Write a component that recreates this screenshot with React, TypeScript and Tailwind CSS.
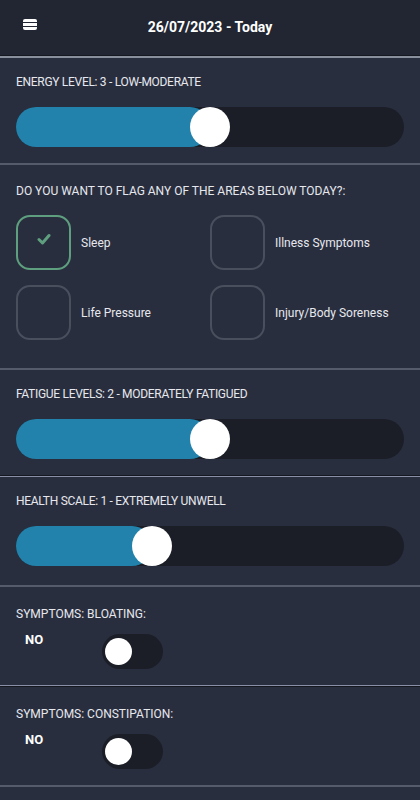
import React from "react";

const SliderRow: React.FC<{ label: string; pct: number; extra?: string }> = ({ label, pct, extra = "pb-4" }) => (
  <div className={`px-4 pt-[16px] ${extra}`}>
    <div className="text-[12px] text-[#e6e8ee] tracking-tight leading-4">{label}</div>
    <div className="relative mt-[17px] h-10 rounded-full bg-[#1b1e27]">
      <div className="absolute left-0 top-0 h-10 rounded-full bg-[#2282ab]" style={{ width: `${pct}%` }} />
      <div
        className="absolute top-0 h-10 w-10 -translate-x-1/2 rounded-full bg-white"
        style={{ left: `${pct}%` }}
      />
    </div>
  </div>
);

const Flag: React.FC<{ label: string; checked?: boolean }> = ({ label, checked }) => (
  <div className="flex items-center gap-[10px]">
    <div
      className={`flex h-[55px] w-[55px] items-center justify-center rounded-[14px] border-2 ${
        checked ? "border-[#5d9f7e]" : "border-[#4a4f5e]"
      }`}
    >
      {checked && (
        <svg width="14" height="12" viewBox="0 0 14 12" className="-mt-2">
          <path d="M2 6.5 L5.5 10 L12 2.5" fill="none" stroke="#5d9f7e" strokeWidth="3" strokeLinecap="round" strokeLinejoin="round" />
        </svg>
      )}
    </div>
    <span className="text-[12px] text-[#e6e8ee]">{label}</span>
  </div>
);

const ToggleRow: React.FC<{ label: string }> = ({ label }) => (
  <div className="px-4 pt-[19px] h-[98px]">
    <div className="text-[12px] text-[#e6e8ee] leading-4">{label}</div>
    <div className="mt-[3px] flex items-start">
      <span className="ml-[9px] mt-[5px] w-[77px] text-[13px] font-bold text-white">NO</span>
      <div className="mt-[9px] flex h-[35px] w-[61px] items-center rounded-full bg-[#1b1e27] px-[3px]">
        <div className="h-[27px] w-[27px] rounded-full bg-white" />
      </div>
    </div>
  </div>
);

const Sep: React.FC = () => <div className="h-[2px] bg-[#565b6b]" />;

export default function App() {
  return (
    <div className="min-h-[800px] w-full bg-[#292e3e]" style={{ fontFamily: "Roboto, 'Noto Sans', sans-serif" }}>
      <div className="relative flex h-[55px] items-center justify-center bg-[#222632]">
        <div className="absolute left-[23px] top-[19px] flex w-[14px] flex-col gap-[1px]">
          <div className="h-[3px] rounded-t-[2px] bg-white" />
          <div className="h-[3px] bg-white" />
          <div className="h-[3px] rounded-b-[2px] bg-white" />
        </div>
        <span className="text-[14px] font-bold text-white">26/07/2023 - Today</span>
      </div>
      <div className="h-[1px] bg-[#151821]" />
      <div className="h-[2px] bg-[#8a8f9c]" />
      <SliderRow label="ENERGY LEVEL: 3 - LOW-MODERATE" pct={50} />
      <Sep />
      <div className="px-4 pt-[18px] pb-[28px]">
        <div className="text-[12px] text-[#e6e8ee] leading-4">DO YOU WANT TO FLAG ANY OF THE AREAS BELOW TODAY?:</div>
        <div className="mt-[16px] grid grid-cols-2 gap-y-[15px] gap-x-0">
          <Flag label="Sleep" checked />
          <Flag label="Illness Symptoms" />
          <Flag label="Life Pressure" />
          <Flag label="Injury/Body Soreness" />
        </div>
      </div>
      <Sep />
      <SliderRow label="FATIGUE LEVELS: 2 - MODERATELY FATIGUED" pct={50} />
      <div className="h-[1px] bg-[#151821]" />
      <div className="h-[1px] bg-[#8a8fa8]" />
      <SliderRow label="HEALTH SCALE: 1 - EXTREMELY UNWELL" pct={35} extra="pb-[19px]" />
      <Sep />
      <ToggleRow label="SYMPTOMS: BLOATING:" />
      <div className="h-[1px] bg-[#8a8fa8]" />
      <div className="h-[1px] bg-[#151821]" />
      <ToggleRow label="SYMPTOMS: CONSTIPATION:" />
      <Sep />
    </div>
  );
}
